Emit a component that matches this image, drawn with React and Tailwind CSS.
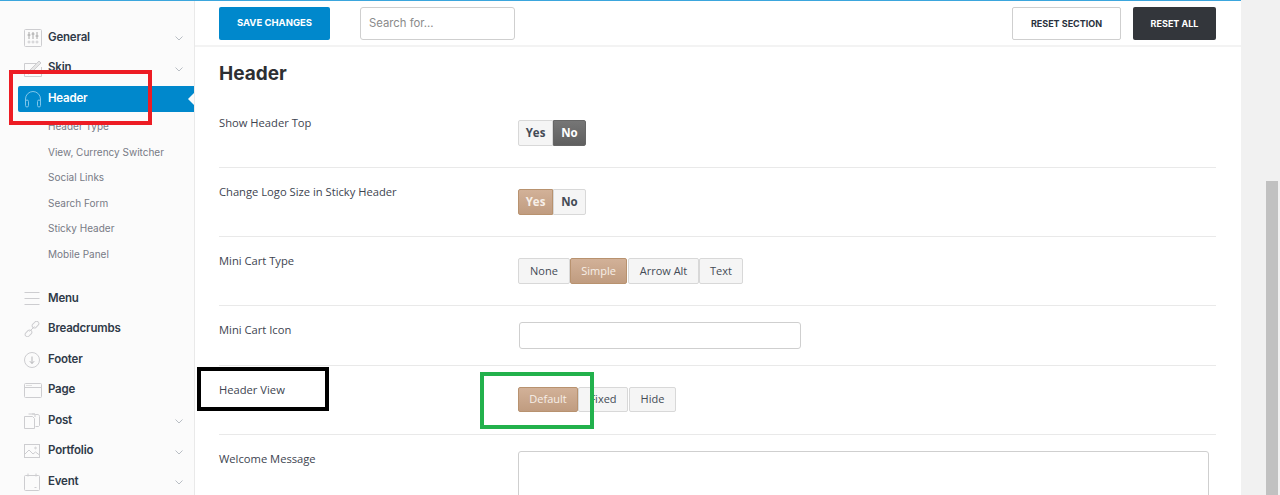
import React from "react";

const Chevron = () => (
  <svg width="8" height="5" viewBox="0 0 8 5" fill="none" stroke="#b9bec4" strokeWidth="1" className="ml-auto mr-[11px] shrink-0 mt-[2px]">
    <path d="M.5.5 4 4 7.500.5" />
  </svg>
);

const S = ({ children, w = 18, h = 18 }) => (
  <svg width={w} height={h} viewBox={`0 0 ${w} ${h}`} fill="none" stroke="#cdcdd0" strokeWidth="1" className="shrink-0">
    {children}
  </svg>
);

const icons = {
  General: (
    <S>
      <rect x=".5" y=".5" width="17" height="17" rx="1" />
      <path d="M5 3v7M9 3v7M13 3v7" stroke="#a8a8a8" />
      <path d="M3.500 6h3M7.500 5h3M11.500 7h3" stroke="#a8a8a8" />
      <circle cx="5" cy="13" r="1" />
      <circle cx="9" cy="13" r="1" />
      <circle cx="13" cy="13" r="1" />
    </S>
  ),
  Skin: (
    <S>
      <path d="M.5 4.500h12M.5 4.500v13h17V8" />
      <path d="M5 12 15 2l2 2L7 14l-3 1z" fill="#e6e6e6" />
    </S>
  ),
  Menu: (
    <S w={16} h={15}>
      <path d="M.5 1.500h15M.5 7.500h15M.5 13.500h15" />
    </S>
  ),
  Breadcrumbs: (
    <S w={16} h={16}>
      <rect x="8" y="1.500" width="7.500" height="4.500" rx="2.250" transform="rotate(-45 11.500 4)" />
      <rect x=".5" y="10" width="7.500" height="4.500" rx="2.250" transform="rotate(-45 4.500 12)" />
      <path d="m5.500 10.500 5-5" />
    </S>
  ),
  Footer: (
    <S w={16} h={16}>
      <circle cx="8" cy="8" r="7.500" />
      <path d="M8 4.500v7M5.800 9.200 8 11.500l2.200-2.300" stroke="#b5b5b8" />
    </S>
  ),
  Page: (
    <S h={15}>
      <rect x=".5" y=".5" width="17" height="14" rx="1" />
      <path d="M.5 4.500h17" />
      <path d="M2.500 2.500h5" stroke="#c5c5c5" strokeDasharray="1 1" />
    </S>
  ),
  Post: (
    <S w={16} h={16}>
      <path d="M.5 3.500h8l2 2v10H.5z" />
      <path d="M4.500 1h6l1 .5h1.500a2 2 0 0 1 2.500 2v9l-1 1h-3" />
      <path d="M8 1h3v3" />
    </S>
  ),
  Portfolio: (
    <S w={16} h={14}>
      <rect x=".5" y=".5" width="15" height="13" />
      <path d="m1 10 4-4 4 4 2.500-2 4 3" />
      <circle cx="11.500" cy="4" r=".8" />
    </S>
  ),
  Event: (
    <S w={16} h={18}>
      <rect x=".5" y="2.500" width="15" height="15" rx="1" />
      <path d="M4 .5v3M12 .5v3M10.500 14.500h2" />
    </S>
  ),
};

const NavItem = ({ name, chevron }) => (
  <div className="flex h-[30.5px] items-center pl-[24px]">
    <div className="flex w-[24px] items-center">{icons[name]}</div>
    <span className="text-[11.5px] font-semibold leading-none tracking-[-0.2px] text-[#2f3a48]">{name}</span>
    {chevron && <Chevron />}
  </div>
);

const Sidebar = () => (
  <aside className="w-[195px] shrink-0 border-r border-[#e9e9e9] bg-[#fbfbfb] pt-[22.300px] font-['Inter',sans-serif]">
    <NavItem name="General" chevron />
    <NavItem name="Skin" chevron />
    <div className="flex h-[30.5px] items-center pl-[18px]">
      <div className="relative flex h-[26px] flex-1 items-center rounded-l-[2px] bg-[#0088cc] pl-[6px]">
        <svg width="18" height="18" viewBox="0 0 18 18" fill="none" stroke="#7fc6ea" strokeWidth="1" className="mr-[6px] shrink-0">
          <path d="M1.500 12V9a7.500 7.500 0 0 1 15 0v3" />
          <rect x="1.500" y="10" width="3" height="7" rx="1.500" />
          <rect x="13.500" y="10" width="3" height="7" rx="1.500" />
        </svg>
        <span className="text-[11.5px] font-semibold leading-none tracking-[-0.2px] text-white">Header</span>
        <div className="absolute right-0 top-[7px] h-0 w-0 border-y-[6px] border-r-[6px] border-y-transparent border-r-[#fbfbfb]" />
      </div>
    </div>
    <div className="flex flex-col pb-[16px] pl-[48px]">
      {["Header Type", "View, Currency Switcher", "Social Links", "Search Form", "Sticky Header", "Mobile Panel"].map((t) => (
        <div key={t} className="flex h-[25.6px] items-center whitespace-nowrap text-[10px] font-normal text-[#777a85]">
          {t}
        </div>
      ))}
    </div>
    <NavItem name="Menu" />
    <NavItem name="Breadcrumbs" />
    <NavItem name="Footer" />
    <NavItem name="Page" />
    <NavItem name="Post" chevron />
    <NavItem name="Portfolio" chevron />
    <NavItem name="Event" chevron />
  </aside>
);

const Btn = ({ children, active, dark, bold, className = "" }) => {
  const base = active
    ? "border-[#b8926f] bg-gradient-to-b from-[#d2b198] to-[#c09c80] text-[#f7efe8]"
    : dark
      ? "border-[#666] bg-gradient-to-b from-[#767676] to-[#5f5f5f] text-white"
      : "border-[#d8d8d8] bg-[#f5f5f5] text-[#444b55]";
  return (
    <div className={`flex h-full items-center justify-center border ${base} ${bold ? "font-bold" : "font-normal"} ${className}`}>
      {children}
    </div>
  );
};

const Row = ({ label, pad = "pt-[21px] pb-[21px]", labelTop = "pt-[15px]", children, border = true }) => (
  <div className={`flex ${border ? "border-t border-[#e9e9e9]" : ""}`}>
    <div className={`w-[299px] shrink-0 ${labelTop} text-[11.2px] leading-[17px] text-[#3d4450]`}>{label}</div>
    <div className={`flex-1 ${pad}`}>{children}</div>
  </div>
);

const Main = () => (
  <main className="flex w-[1046px] shrink-0 flex-col overflow-hidden bg-white">
    <div className="flex h-[47px] shrink-0 items-center border-b-2 border-[#f3f3f3] pl-[24px] pr-[25px] pt-[2px]">
      <div className="flex h-[33px] w-[111px] items-center justify-center rounded-[2px] bg-[#0088cc] font-['Inter',sans-serif] text-[9.500px] font-bold text-white">
        SAVE CHANGES
      </div>
      <div className="ml-[30px] flex h-[33px] w-[155px] items-center rounded-[3px] border border-[#cfcfcf] pl-[8px] font-['Inter',sans-serif] text-[11.300px] text-[#8a8a8a]">
        Search for...
      </div>
      <div className="ml-auto flex h-[33px] w-[109px] items-center justify-center rounded-[2px] border border-[#cfcfcf] font-['Inter',sans-serif] text-[9px] font-bold text-[#2a3240]">
        RESET SECTION
      </div>
      <div className="ml-[12px] flex h-[33px] w-[83px] items-center justify-center rounded-[2px] bg-[#33363b] font-['Inter',sans-serif] text-[9px] font-bold text-white">
        RESET ALL
      </div>
    </div>
    <div className="pl-[24px] pr-[25px]">
      <h1 className="pb-[22px] pt-[13px] font-['Inter',sans-serif] text-[19px] font-bold leading-[27px] text-[#2d2f33]">Header</h1>
      <Row label="Show Header Top" border={false} pad="pb-[21px] pt-[11px]" labelTop="pt-[5px]">
        <div className="flex h-[26px] text-[11.500px]">
          <Btn bold className="w-[35px] rounded-l-[2px] text-[#222]">Yes</Btn>
          <Btn dark bold className="w-[33px] rounded-r-[2px]">No</Btn>
        </div>
      </Row>
      <Row label="Change Logo Size in Sticky Header">
        <div className="flex h-[26px] text-[11.500px]">
          <Btn active bold className="w-[35px] rounded-l-[2px]">Yes</Btn>
          <Btn bold className="w-[33px] rounded-r-[2px] text-[#222]">No</Btn>
        </div>
      </Row>
      <Row label="Mini Cart Type">
        <div className="flex h-[26px] text-[11px]">
          <Btn className="w-[52px] rounded-[2px]">None</Btn>
          <Btn active className="w-[57px] rounded-[2px]">Simple</Btn>
          <Btn className="ml-[1px] w-[71px] rounded-[2px]">Arrow Alt</Btn>
          <Btn className="w-[44px] rounded-[2px]">Text</Btn>
        </div>
      </Row>
      <Row label="Mini Cart Icon" pad="pt-[16px] pb-[16px]">
        <div className="ml-[1px] h-[27px] w-[282px] rounded-[3px] border border-[#cfcfcf] bg-white" />
      </Row>
      <Row label="Header View" pad="pt-[21px] pb-[22px]">
        <div className="flex h-[25px] text-[11px]">
          <Btn active className="w-[60px] rounded-[2px]">Default</Btn>
          <Btn className="w-[50px] rounded-[2px]">Fixed</Btn>
          <Btn className="ml-[1px] w-[47px] rounded-[2px]">Hide</Btn>
        </div>
      </Row>
      <Row label="Welcome Message" pad="pt-[16px]">
        <div className="h-[80px] w-[691px] rounded-[3px] border border-[#cfcfcf] bg-white" />
      </Row>
    </div>
  </main>
);

export default function App() {
  return (
    <div className="relative flex h-[495px] w-[1280px] overflow-hidden bg-[#f1f1f1] font-['Open_Sans',sans-serif]">
      <Sidebar />
      <Main />
      <div className="relative flex-1">
        <div className="absolute left-[25px] top-[181px] h-[314px] w-[12px] bg-[#c1c1c1]" />
      </div>
      <div className="absolute left-0 top-0 h-[1px] w-[1241px] bg-[#3ba6dd]" />
      <div className="absolute left-[9px] top-[70px] h-[55px] w-[143px] border-[4px] border-[#ed1c24]" />
      <div className="absolute left-[197px] top-[367px] h-[44px] w-[132px] border-[4px] border-black" />
      <div className="absolute left-[480px] top-[372px] h-[57px] w-[114px] border-[4px] border-[#22b14c]" />
    </div>
  );
}
